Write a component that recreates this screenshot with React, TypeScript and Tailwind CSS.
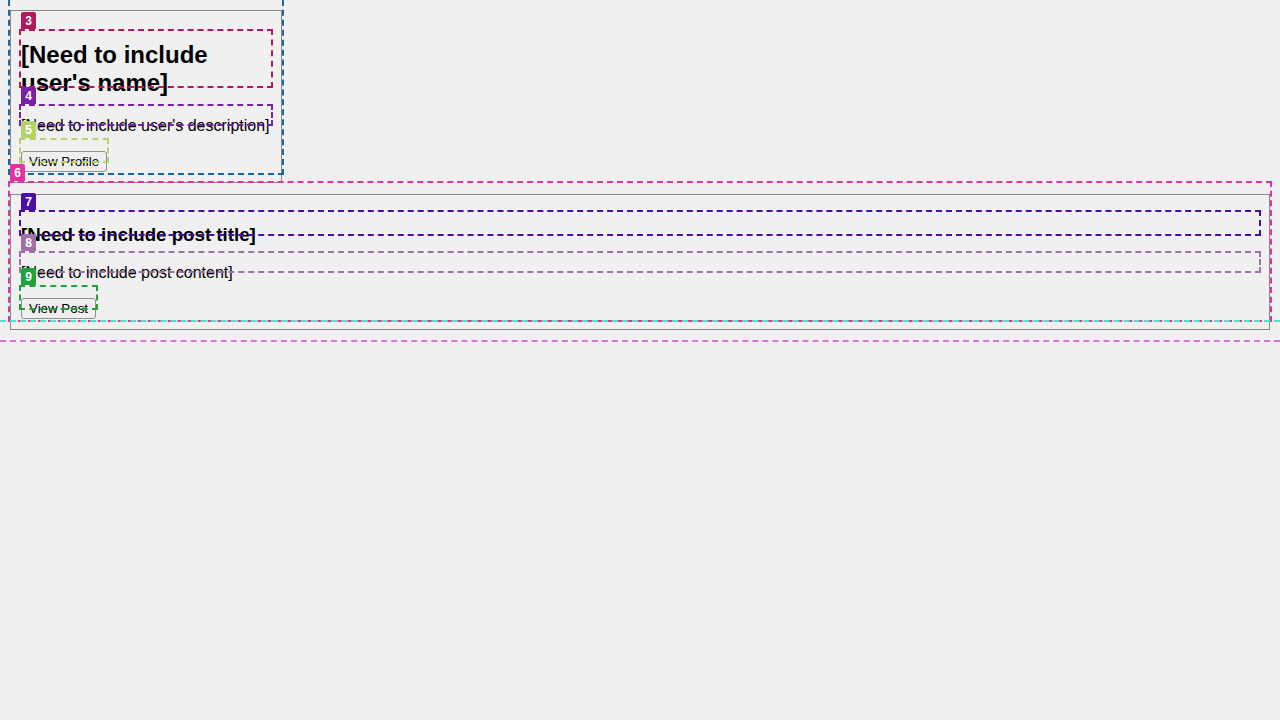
import React from 'react';

type Overlay = {
  id: string;
  box: string;
  label: string;
  tag: string;
};

// debug outlines drawn over the page
const overlays: Overlay[] = [
  { id: '2', box: 'left-[8px] top-[-20px] w-[276px] h-[195px] border-[#1a67a3]', label: '', tag: '' },
  { id: '3', box: 'left-[19px] top-[29px] w-[254px] h-[59px] border-[#b3185c]', label: 'left-[21px] top-[12px] bg-[#b3185c]', tag: '3' },
  { id: '4', box: 'left-[19px] top-[104px] w-[254px] h-[22px] border-[#7b1fa8]', label: 'left-[21px] top-[87px] bg-[#7b1fa8]', tag: '4' },
  { id: '5', box: 'left-[19px] top-[138px] w-[90px] h-[25px] border-[#b4d36b]', label: 'left-[21px] top-[121px] bg-[#b4d36b]', tag: '5' },
  { id: '6', box: 'left-[8px] top-[181px] w-[1264px] h-[141px] border-[#e035a0]', label: 'left-[10px] top-[164px] bg-[#e035a0]', tag: '6' },
  { id: '7', box: 'left-[19px] top-[210px] w-[1242px] h-[26px] border-[#4b0fa8]', label: 'left-[21px] top-[193px] bg-[#4b0fa8]', tag: '7' },
  { id: '8', box: 'left-[19px] top-[251px] w-[1242px] h-[22px] border-[#a070a8]', label: 'left-[21px] top-[234px] bg-[#a070a8]', tag: '8' },
  { id: '9', box: 'left-[19px] top-[285px] w-[79px] h-[25px] border-[#21a33c]', label: 'left-[21px] top-[268px] bg-[#21a33c]', tag: '9' },
];

const Button = ({ children }: { children: React.ReactNode }) => (
  <button className="block rounded-[3px] border border-[#8f8f8f] bg-[#efefef] px-[7px] py-[2px] text-[13.333px] leading-[normal] text-black">
    {children}
  </button>
);

export default function App() {
  return (
    <div className="relative min-h-screen overflow-hidden bg-[#f0f0f0] font-['Liberation_Sans',Arial,sans-serif] text-black">
      <div className="flex flex-col items-start gap-[11px] p-[10px]">
        {/* user card */}
        <div className="w-[272px] border border-[#888888] p-[10px]">
          <h2 className="mt-[20px] mb-[20px] text-[24px] font-bold leading-[normal]">
            [Need to include user's name]
          </h2>
          <p className="mb-[16px] text-[16px] leading-[normal]">[Need to include user's description]</p>
          <Button>View Profile</Button>
        </div>

        {/* post card */}
        <div className="w-[1260px] border border-[#888888] p-[10px]">
          <h3 className="mt-[18.72px] mb-[18.72px] text-[18.72px] font-bold leading-[normal]">
            [Need to include post title]
          </h3>
          <p className="mb-[16px] text-[16px] leading-[normal]">[Need to include post content]</p>
          <Button>View Post</Button>
        </div>
      </div>

      {overlays.map((o) => (
        <React.Fragment key={o.id}>
          <div className={`pointer-events-none absolute border-2 border-dashed ${o.box}`} />
          {o.tag && (
            <div
              className={`pointer-events-none absolute flex h-[17px] w-[15px] items-center justify-center rounded-t-[2px] text-[12px] font-bold leading-none text-white ${o.label}`}
            >
              {o.tag}
            </div>
          )}
        </React.Fragment>
      ))}

      <div className="pointer-events-none absolute left-0 top-[320px] w-full border-t-2 border-dashed border-[#4fe6c8]" />
      <div className="pointer-events-none absolute left-0 top-[340px] w-full border-t-2 border-dashed border-[#dc72d8]" />
    </div>
  );
}
